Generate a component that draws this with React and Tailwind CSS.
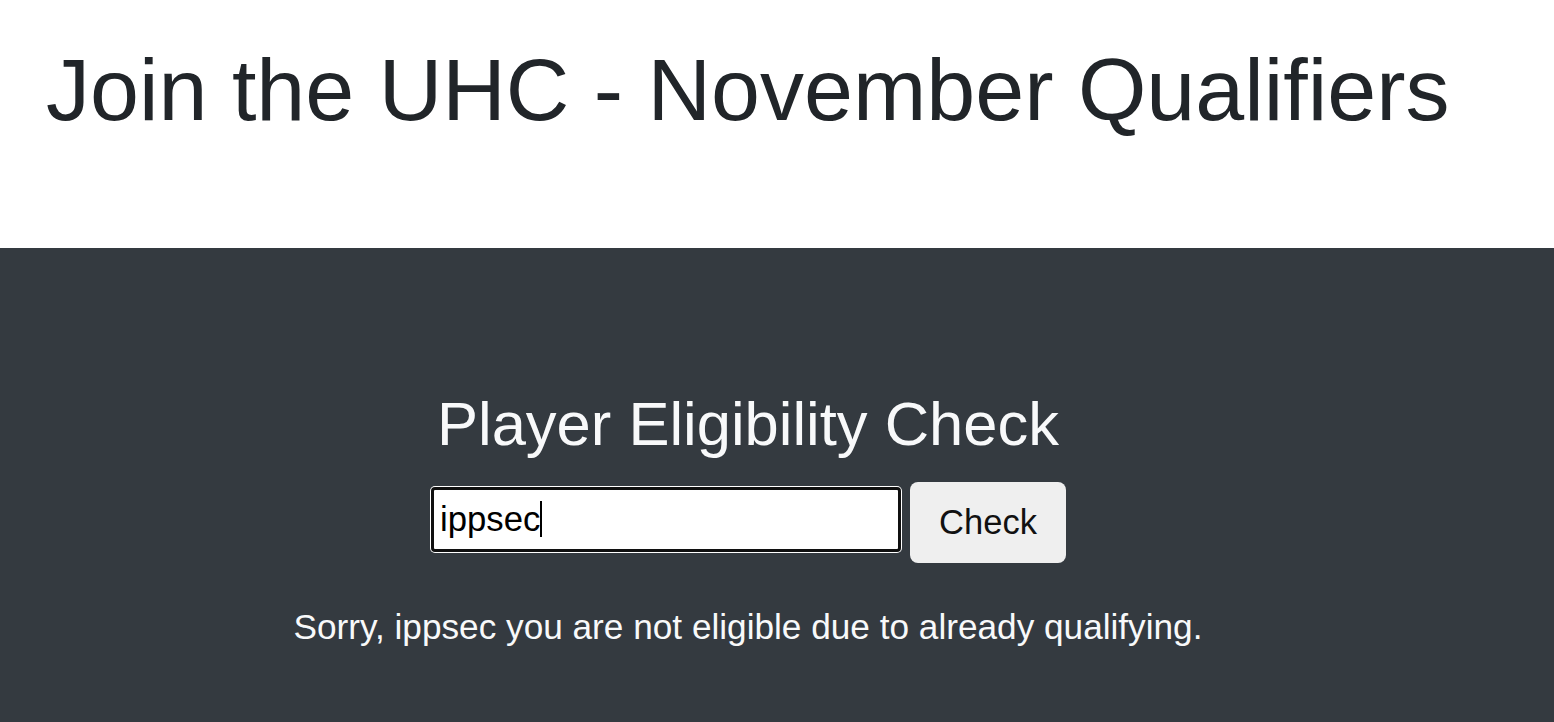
export default function App() {
  return (
    <div className="min-h-[722px] bg-[#343a40]" style={{ fontFamily: '"Liberation Sans", Arial, sans-serif' }}>
      <div className="bg-white h-[248px] pl-[46px] pt-[37px]">
        <h1 className="text-[88px] leading-[1.2] text-[#212529] font-normal">Join the UHC - November Qualifiers</h1>
      </div>
      <div className="w-[1496px] pt-[139px] flex flex-col items-center text-[#f8f9fa]">
        <h2 className="text-[61.5px] leading-[1.2] font-normal">Player Eligibility Check</h2>
        <div className="flex items-start gap-[8px] mt-[21px]">
          <div className="mt-[4px] w-[472px] h-[67px] rounded-[5px] bg-white p-[1px]">
            <div className="w-full h-full rounded-[4px] border-[3px] border-[#101010] bg-white flex items-center pl-[6px]">
              <span className="text-[34.7px] text-black leading-none">ippsec</span>
              <span className="w-[2px] h-[36px] bg-black"></span>
            </div>
          </div>
          <div className="w-[156px] h-[81px] rounded-[8px] bg-[#efefef] flex items-center justify-center pt-[2px] text-[34.5px] text-[#111]">Check</div>
        </div>
        <p className="mt-[38px] text-[35.2px] leading-[1.5]">Sorry, ippsec you are not eligible due to already qualifying.</p>
      </div>
    </div>
  );
}
